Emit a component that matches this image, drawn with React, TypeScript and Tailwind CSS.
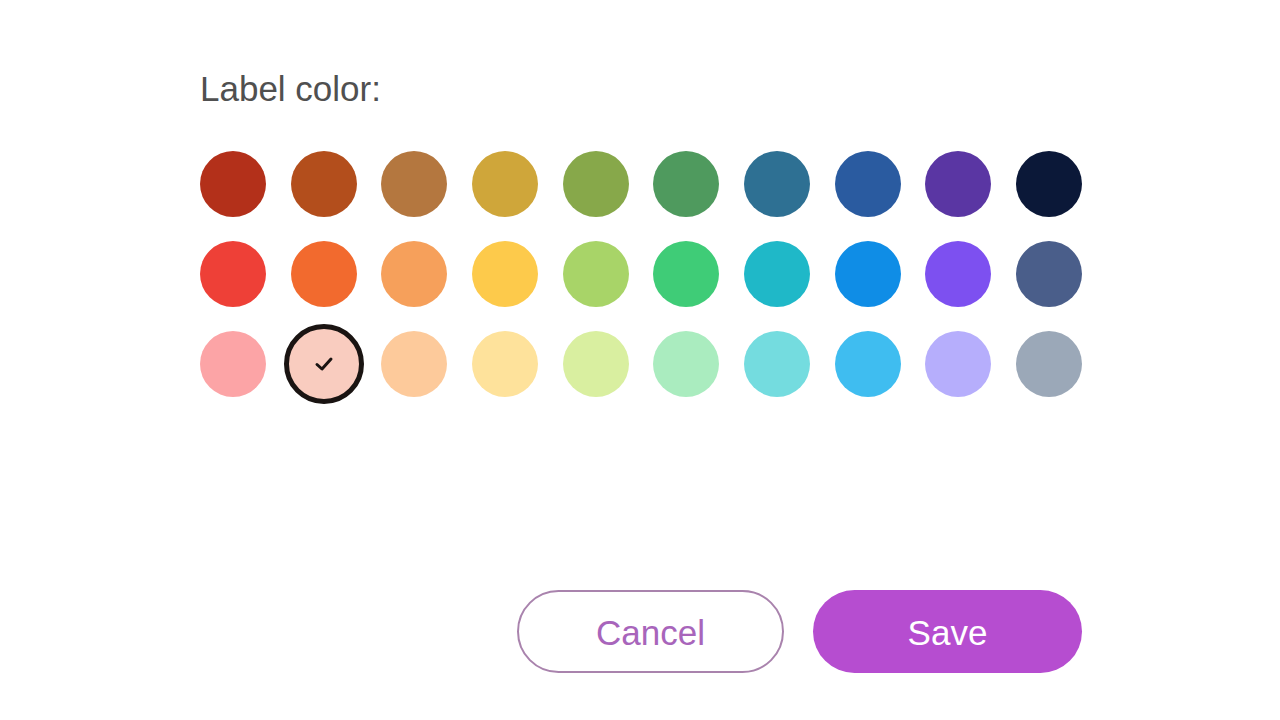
import React from "react";

const rows: string[][] = [
  ["#b3301a", "#b34e1c", "#b4773f", "#cfa63a", "#87a84a", "#4f9a5e", "#2e7093", "#2a5ba0", "#5a36a3", "#0b1838"],
  ["#ee4037", "#f26a2e", "#f6a05b", "#fdca4b", "#a8d468", "#3fcc77", "#1fb8c8", "#0f8de6", "#7d50f0", "#4a5e8a"],
  ["#fca4a6", "#f9ccbf", "#fdca9b", "#fee29b", "#d9efa0", "#aaecbf", "#74dcdf", "#3fbdf0", "#b6aefc", "#9ba8b8"],
];

export default function App() {
  return (
    <div className="w-[1280px] h-[720px] bg-white" style={{ fontFamily: '"Liberation Sans", Arial, sans-serif' }}>
      <div className="ml-[200px] w-[882px] pt-[68px] flex flex-col">
        <div className="text-[35px] leading-[42px] text-[#505050]">Label color:</div>
        <div className="mt-[41px] flex flex-col gap-y-[24px]">
          {rows.map((row, ri) => (
            <div key={ri} className="flex justify-between">
              {row.map((c, ci) => {
                const selected = ri === 2 && ci === 1;
                return (
                  <div key={ci} className="w-[66px] h-[66px] flex items-center justify-center">
                    {selected ? (
                      <div
                        className="w-[80px] h-[80px] shrink-0 rounded-full border-[5px] border-[#1a1412] flex items-center justify-center"
                        style={{ backgroundColor: c }}
                      >
                        <svg width="22" height="18" viewBox="0 0 22 18" fill="none">
                          <path d="M4 9.5 L9 14 L18 4" stroke="#1a1412" strokeWidth="3" strokeLinecap="round" strokeLinejoin="round" />
                        </svg>
                      </div>
                    ) : (
                      <div className="w-[66px] h-[66px] rounded-full" style={{ backgroundColor: c }} />
                    )}
                  </div>
                );
              })}
            </div>
          ))}
        </div>
        <div className="mt-[193px] flex justify-end gap-[29px]">
          <button className="w-[267px] h-[83px] pt-[4px] rounded-full border-2 border-[#a983ad] text-[#a865bb] text-[35px] bg-white">
            Cancel
          </button>
          <button className="w-[269px] h-[83px] pt-[4px] rounded-full bg-[#b64dd0] text-white text-[35px]">
            Save
          </button>
        </div>
      </div>
    </div>
  );
}
